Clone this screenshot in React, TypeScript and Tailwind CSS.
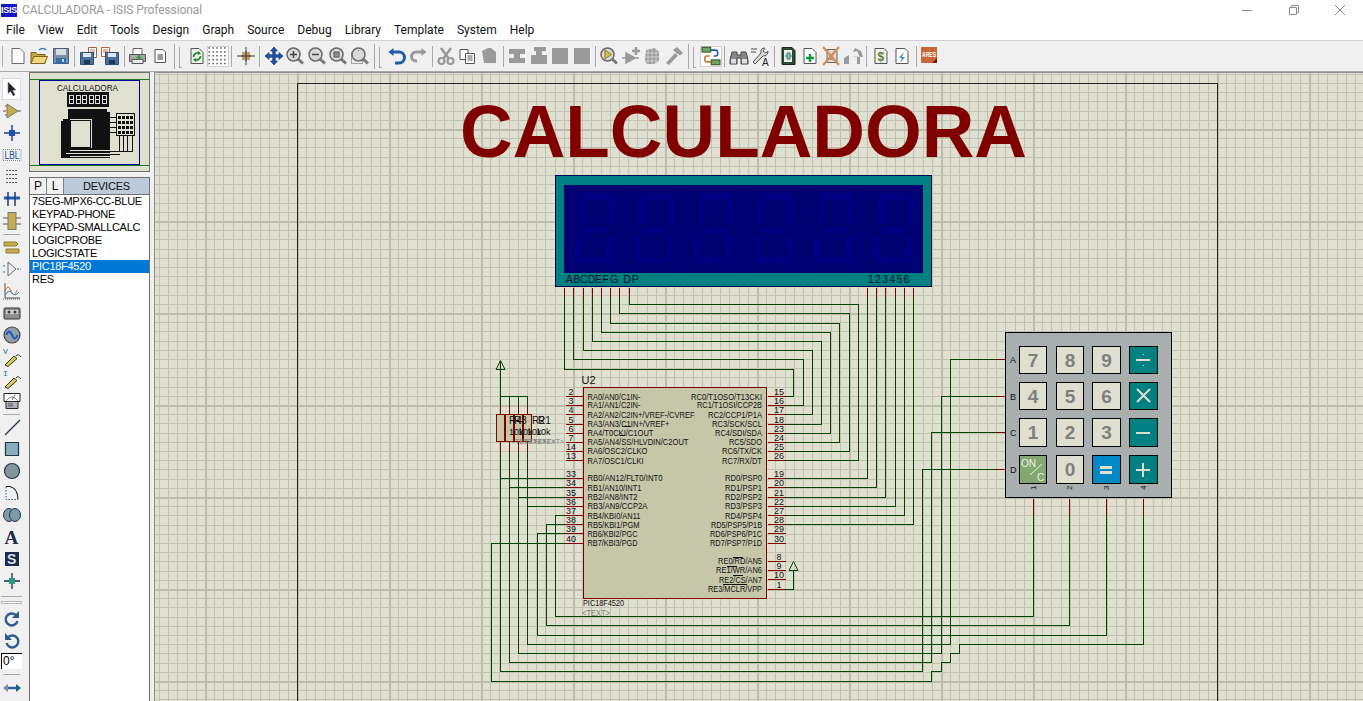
import React from "react";

const FONT = "'Liberation Sans', Arial, sans-serif";
const WIRE = "#004800";
const PIN = "#800000";
const s = (v: number) => Math.floor(v) + 0.5;
const toPath = (p: number[][]) => "M" + p.map(([x, y]) => `${s(x)} ${s(y)}`).join("L");

function Ic({ children }: { children: React.ReactNode }) {
  return <svg width="20" height="20" viewBox="0 0 20 20" className="block">{children}</svg>;
}
const G = "#9a9a9a";
const mag = (inner: React.ReactNode) => (
  <>
    <path d="M12.5 12.5l5.5 5" stroke="#777" strokeWidth="3" />
    <circle cx="8.5" cy="8.5" r="6.5" fill="#d9d9d9" stroke="#6a6a6a" strokeWidth="1.5" />
    {inner}
  </>
);
const floppy = <><path d="M1.5 6.5h13v12h-13z" fill="#4a6f9c" stroke="#2f4f78" /><path d="M4 7h8v4H4z" fill="#dfe6ee" /><path d="M5 14h6v4H5z" fill="#23364f" /></>;

const topIcons: Record<string, React.ReactNode> = {
  new: <Ic><path d="M4 2.500h8l4 4v11H4z" fill="#fff" stroke="#6a6a6a" /></Ic>,
  open: <Ic><path d="M2 6.500h5l1.500 2H16v9H2z" fill="#c9a53e" stroke="#7a6320" /><path d="M2 17.500l3-7h13.500l-3 7z" fill="#f3d77c" stroke="#7a6320" /><path d="M10 4q4-3 7 0" fill="none" stroke="#3f79c2" strokeWidth="1.500" /></Ic>,
  save: <Ic><path d="M2.500 2.500h15v15h-15z" fill="#7c8ea3" stroke="#4e5d70" /><path d="M5 3h10v6H5z" fill="#d8dde3" /><path d="M5 12h10v5.500H5z" fill="#2d6fb3" /><path d="M11 13h2v3h-2z" fill="#ccd" /></Ic>,
  imp: <Ic><path d="M9.500 1.500h8v10h-8z" fill="#fff" stroke="#8a6a50" /><path d="M11 4h5M11 6h5M11 8h5" stroke="#c08060" />{floppy}</Ic>,
  exp: <Ic><path d="M1.500 1.500h8v9h-8z" fill="#fff" stroke="#b06a40" /><path d="M3 4h5M3 6h5" stroke="#d06a30" />{<g transform="translate(4 0)">{floppy}</g>}</Ic>,
  print: <Ic><path d="M5 2.500h9v6H5z" fill="#fff" stroke="#666" /><path d="M1.500 8.500h16v7h-16z" fill="#a8a8a8" stroke="#555" /><path d="M4 13.500h11v4H4z" fill="#eee" stroke="#555" /><path d="M11 9v5M8.500 11.500h5" stroke="#19a032" strokeWidth="1.600" /></Ic>,
  area: <Ic><path d="M5 3.500h8l2.500 2.500v10.500H5z" fill="#fff" stroke="#555" /><path d="M7.500 8h5.500v6H7.500z" fill="#999" /></Ic>,
  refresh: <Ic><path d="M4 2.500h8l4 4v11H4z" fill="#eef3ea" stroke="#555" /><path d="M6.500 11a4 4 0 0 1 6-3.500M13.500 10a4 4 0 0 1-6 3.500" fill="none" stroke="#1c8a2a" strokeWidth="1.800" /><path d="M11 5l3 2.500-3.200 1.500zM9 16l-3-2.500 3.200-1.500z" fill="#1c8a2a" /></Ic>,
  grid: <Ic>{[3, 7, 11, 15, 19].flatMap((y) => [1, 5, 9, 13, 17].map((x) => <rect key={x + "-" + y} x={x - 0.5} y={y - 2} width="1.500" height="1.500" fill="#555" />))}</Ic>,
  origin: <Ic><path d="M10 1v18M1 10h18" stroke="#333" /><rect x="6" y="6" width="8" height="8" fill="#b8a060" /><path d="M10 5v10M5 10h10" stroke="#333" /></Ic>,
  pan: <Ic><path d="M10 1l3.500 4H11.300v3.700H15V6.500l4 3.500-4 3.500v-2.200h-3.700V15h2.200L10 19l-3.500-4h2.200v-3.700H5v2.200L1 10l4-3.500v2.200h3.700V5H6.500z" fill="#1b52a8" stroke="#10306a" strokeWidth=".6" /></Ic>,
  zin: <Ic>{mag(<path d="M8.500 5v7M5 8.500h7" stroke="#444" strokeWidth="1.500" />)}</Ic>,
  zout: <Ic>{mag(<path d="M5 8.500h7" stroke="#444" strokeWidth="1.500" />)}</Ic>,
  zall: <Ic>{mag(<rect x="6" y="6" width="5" height="5" fill="#8f8f8f" stroke="#555" />)}</Ic>,
  zarea: <Ic><rect x="1.500" y="6.500" width="11" height="11" fill="none" stroke="#555" strokeDasharray="1 1" />{mag(<path d="M8 4h1v1H8z" fill="#555" />)}</Ic>,
  undo: <Ic><path d="M5 6h7a4.500 4.500 0 0 1 0 11H8" fill="none" stroke="#1c5cab" strokeWidth="3" /><path d="M1.500 6l5-4v8z" fill="#1c5cab" /></Ic>,
  redo: <Ic><path d="M15 6H8a4.500 4.500 0 0 0 0 9h1" fill="none" stroke={G} strokeWidth="3" /><path d="M18.500 6l-5-4v8z" fill={G} /></Ic>,
  cut: <Ic><path d="M5 2l8 11M15 2L7 13" stroke={G} strokeWidth="2.500" /><circle cx="5.500" cy="15" r="3" fill="none" stroke={G} strokeWidth="2.200" /><circle cx="14.500" cy="15" r="3" fill="none" stroke={G} strokeWidth="2.200" /></Ic>,
  copy: <Ic><path d="M2 3.500h8v10H2z" fill="#fff" stroke="#555" /><path d="M7.500 7.500h9v10h-9z" fill="#fff" stroke="#555" /><path d="M9.500 10h5M9.500 12h5M9.500 14h5" stroke="#555" /></Ic>,
  paste: <Ic><path d="M3 5l6-3h3l5 4v11H5z" fill={G} /></Ic>,
  bcopy: <Ic><path d="M2 3h16v5H2zM7 8h6v4H7zM2 12h16v5H2z" fill={G} /></Ic>,
  bmove: <Ic><path d="M2 9h16v9H2zM7 5h6v4H7zM5 1h12v4H5z" fill={G} /></Ic>,
  brot: <Ic><path d="M2 2h16v16H2z" fill={G} /></Ic>,
  pick: <Ic>{mag(<path d="M6 4l6.500 4.500L6 13z" fill="#d8c050" stroke="#8a7a20" />)}</Ic>,
  make: <Ic><path d="M1 12h4M14 12h4M5 7l9 5-9 5z" fill={G} stroke={G} strokeWidth="1.500" /><path d="M15 1v8M11 5h8" stroke={G} strokeWidth="2.500" /></Ic>,
  pack: <Ic><path d="M4 4l9-2 4 4v9l-5 3H5l-2-3z" fill={G} /><path d="M2 7h17M2 11h17M2 15h17M6 1v18M10 1v18M14 1v18" stroke="#f0f0f0" strokeWidth=".6" /></Ic>,
  hammer: <Ic><path d="M2 17l9-10 3 2.500L5 19z" fill={G} /><path d="M9 4l4-3 6 6-3 2.500-3-2z" fill={G} /></Ic>,
  auto: <Ic><rect x="1" y="1" width="9" height="5" fill="#6fa75f" stroke="#2c4a25" /><rect x="10.500" y="14" width="9" height="5" fill="#6fa75f" stroke="#2c4a25" /><path d="M10 4h5q2 0 2 2v2q0 2-2 2h-2" fill="none" stroke="#1c5cab" strokeWidth="1.600" /><path d="M10.500 16H6q-2 0-2-2v-2q0-2 2-2h3" fill="none" stroke="#d0742a" strokeWidth="1.600" /></Ic>,
  bino: <Ic><path d="M3 6h5v3h4V6h5l2 8v4h-7v-6H8v6H1v-4z" fill="#888" stroke="#444" /><rect x="2" y="13" width="5" height="4.500" fill="#ddd" /><rect x="13" y="13" width="5" height="4.500" fill="#ddd" /></Ic>,
  prop: <Ic><path d="M1 3h6M1 6h5" stroke="#444" /><path d="M3 16l8-9q-1-5 4-5l-2 3 3 2 2-2q0 5-5 5l-8 8z" fill="#d8d8d8" stroke="#555" /><text x="12" y="19.500" fontSize="10" fontFamily={FONT} fill="#222">A</text></Ic>,
  explorer: <Ic><path d="M4 1.500h10l3 3v14H4z" fill="#2f4a33" stroke="#222" /><path d="M6 4h8v12H6z" fill="#e7efe2" /><path d="M7 10h2M12 10h2M9 7h3v6H9z" stroke="#2a7a8a" fill="#9ec59a" /></Ic>,
  nsheet: <Ic><path d="M4 2.500h8l4 4v11H4z" fill="#fff" stroke="#555" /><path d="M10 8v8M6 12h8" stroke="#0f9a3a" strokeWidth="2.500" /></Ic>,
  rsheet: <Ic><path d="M6 3.500h8l2 2v11H6z" fill="#dcdcdc" stroke="#666" /><path d="M8 8h4v6H8z" fill="#999" /><path d="M2 1l16 18M18 1L2 19" stroke="#d98b4f" strokeWidth="2.200" /></Ic>,
  child: <Ic><path d="M1 12l5-3v9H1zM8 10h6v8h3v-7l-3-6-4 1 2-4 6 3 2 6" fill={G} /></Ic>,
  bom: <Ic><path d="M4 2.500h9l3 3v12H4z" fill="#f2f2e8" stroke="#555" /><text x="6.500" y="15" fontSize="12" fontFamily={FONT} fill="#667a3a" fontWeight="700">$</text></Ic>,
  erc: <Ic><path d="M4 2.500h9l3 3v12H4z" fill="#fff" stroke="#555" /><path d="M12 6l-5 6h3l-2 5 5-6h-3z" fill="#2a8ad8" /></Ic>,
  ares: <Ic><rect x="1" y="1" width="16" height="16" fill="#c9663a" /><path d="M12 17l5-5v5z" fill="#7a1a10" /><text x="2" y="11" fontSize="7" fontWeight="700" fontFamily={FONT} fill="#fff" textLength="14" lengthAdjust="spacingAndGlyphs">ARES</text></Ic>,
};

const topBar: string[] = ["new", "open", "save", "|", "imp", "exp", "|", "print", "area", "#", "refresh", "*grid", "|", "origin", "|", "pan", "zin", "zout", "zall", "zarea", "#", "undo", "redo", "|", "cut", "copy", "paste", "|", "bcopy", "bmove", "brot", "brot", "|", "pick", "make", "pack", "hammer", "#", "*auto", "|", "bino", "prop", "|", "explorer", "nsheet", "rsheet", "child", "|", "bom", "erc", "|", "ares"];

function TopToolbar() {
  return (
    <div className="flex h-[31px] items-center pl-[7px] bg-[#f0f0f0] border-b border-[#a8a8a8] relative shrink-0">
      <div className="absolute left-[2px] top-[5px] w-[2px] h-[21px] border-l border-[#b0b0b0]" />
      {topBar.map((it, i) => {
        if (it === "|") return <div key={i} className="w-[6.4px] h-[21px] flex justify-center"><div className="w-px h-full bg-[#a9a9a9]" /></div>;
        if (it === "#") return (
          <div key={i} className="w-[15.5px] h-[25px] flex justify-center gap-[4px]">
            <div className="w-px h-full bg-[#a9a9a9]" />
            <div className="w-[3px] h-[21px] mt-[3px] border-l border-b border-[#a9a9a9]" />
          </div>
        );
        const on = it.startsWith("*");
        const key = on ? it.slice(1) : it;
        return (
          <div key={i} className={on ? "w-[21.5px] h-[21px] flex items-center justify-center bg-white border border-[#d0d0d0]" : "w-[21.5px] h-[21px] flex items-center justify-center"}>
            {topIcons[key]}
          </div>
        );
      })}
    </div>
  );
}

const pencil = (label: string) => (
  <Ic>
    <text x="1" y="7" fontSize="8" fontFamily="'Liberation Mono', monospace" fill="#008080">{label}</text>
    <path d="M3 18l9-9 3 2.500-9 8z" fill="#e0c850" stroke="#333" />
    <path d="M14 9q2-3 5 1" fill="none" stroke="#333" />
  </Ic>
);
const leftIcons: Record<string, React.ReactNode> = {
  pointer: <Ic><path d="M6 2l9 9-4 .5 3 5.500-2 1-3-5.500L6 15z" fill="#222" stroke="#556" strokeWidth=".7" /></Ic>,
  comp: <Ic><path d="M1 10h3M16 10h3M7 5h-4M7 14H3" stroke="#555" /><path d="M5 3l11 7-11 7z" fill="#c6ae4e" stroke="#777" /></Ic>,
  junction: <Ic><path d="M10 2v16M2 10h16" stroke="#123e8a" strokeWidth="1.400" /><rect x="7" y="7" width="6" height="6" fill="#1b4fb4" /></Ic>,
  lbl: <Ic><rect x="1" y="4.500" width="18" height="11" fill="none" stroke="#888" strokeDasharray="1 1" /><text x="2.500" y="14" fontSize="10" fontFamily={FONT} fill="#124a9a" textLength="15" lengthAdjust="spacingAndGlyphs">LBL</text></Ic>,
  script: <Ic><path d="M4 3.500h12M4 7.500h12M4 11.500h12M4 15.500h12" stroke="#555" strokeDasharray="2 1" /></Ic>,
  bus: <Ic><path d="M2 9h16" stroke="#1c5cc0" strokeWidth="3" /><path d="M6 3v14M13 3v14" stroke="#1f3f66" strokeWidth="1.500" /></Ic>,
  sub: <Ic><path d="M1 7h5M1 13h5M14 7h5M14 13h5" stroke="#555" /><rect x="6" y="1.500" width="8" height="17" fill="#c6ae4e" stroke="#777" /></Ic>,
  term: <Ic><path d="M2 5h12l2 2-2 2H2zM4 12h13v4H4z" fill="#c6ae4e" stroke="#8a7a2a" /></Ic>,
  port: <Ic><path d="M6 3l8 7-8 7z" fill="none" stroke="#667" /><path d="M1 7h3M1 13h3M15 10h4" stroke="#008080" strokeDasharray="2 1" /></Ic>,
  graph: <Ic><path d="M3 2v15h15" stroke="#555" fill="none" /><path d="M3 10q3-8 6 0t6-1" fill="none" stroke="#d0742a" /><path d="M3 14q4-6 7-2t7-1" fill="none" stroke="#2a7ac0" /><path d="M1 18h18" stroke="#555" strokeDasharray="1 1" /></Ic>,
  tape: <Ic><rect x="2" y="5" width="16" height="11" rx="1" fill="#8f8f8f" stroke="#333" /><rect x="4" y="7" width="12" height="4" fill="#d0d0d0" /><circle cx="7" cy="9" r="1.500" fill="#333" /><circle cx="13" cy="9" r="1.500" fill="#333" /></Ic>,
  gen: <Ic><circle cx="10" cy="10" r="8" fill="#969fa8" stroke="#444" strokeWidth="1.200" /><path d="M4.500 10q2.500-7 5.500 0t5.500 0" fill="none" stroke="#1c5cc0" strokeWidth="2" /></Ic>,
  vp: pencil("V"),
  ip: pencil("I"),
  inst: <Ic><path d="M2 2.500h16v8H2z" fill="#fff" stroke="#222" /><path d="M4 10q6-8 12 0" fill="none" stroke="#d0742a" /><path d="M10 9l3-5" stroke="#2a7ac0" /><path d="M4 10.500h12v7H4z" fill="#aeb4ba" stroke="#222" /><path d="M6 13h5M6 15h5" stroke="#555" /></Ic>,
  line: <Ic><path d="M3 18L18 3" stroke="#23364f" strokeWidth="1.300" /></Ic>,
  box: <Ic><path d="M3.500 3.500h13v13h-13z" fill="#87aeba" stroke="#23364f" strokeWidth="1.200" /></Ic>,
  circle: <Ic><circle cx="10" cy="10" r="7.500" fill="#84979a" stroke="#23364f" strokeWidth="1.200" /></Ic>,
  arc: <Ic><path d="M4 3.500h4q8 2 8 13" fill="none" stroke="#222" strokeWidth="1.200" /><path d="M4 4v12.500h12" fill="none" stroke="#1c5cc0" strokeDasharray="1.500 1.500" /></Ic>,
  path: <Ic><ellipse cx="7" cy="10" rx="5.500" ry="6.500" fill="#7d9aa8" stroke="#23364f" /><ellipse cx="13" cy="10" rx="5.500" ry="6.500" fill="#7d9aa8" stroke="#23364f" /></Ic>,
  A: <Ic><text x="2.500" y="17" fontSize="19" fontWeight="700" fontFamily="'Liberation Serif', serif" fill="#1d2a4a">A</text></Ic>,
  S: <Ic><rect x="3" y="3" width="14" height="14" fill="#1d2a4a" /><text x="5" y="15" fontSize="14" fontWeight="700" fontFamily={FONT} fill="#d8e0e8">S</text></Ic>,
  marker: <Ic><path d="M10 2v16M2 10h16" stroke="#1d2a4a" strokeWidth="1.300" /><rect x="7" y="7" width="6" height="6" fill="#2e9a7c" /></Ic>,
  cw: <Ic><path d="M15.500 12a6 6 0 1 1-1.800-6" fill="none" stroke="#2d5c92" strokeWidth="2.400" /><path d="M17 2v7h-7z" fill="#2d5c92" /></Ic>,
  ccw: <Ic><path d="M4.500 12a6 6 0 1 0 1.800-6" fill="none" stroke="#2d5c92" strokeWidth="2.400" /><path d="M3 2v7h7z" fill="#2d5c92" /></Ic>,
  flip: <Ic><path d="M1 10l5-4v8z" fill="#6e94b0" /><path d="M19 10l-5-4v8z" fill="#2d5c92" /><path d="M6 10h8" stroke="#2d5c92" strokeWidth="2.400" /></Ic>,
};

function LeftBar() {
  const sep = <div className="h-px mx-[3px] my-[1.5px] bg-[#a9a9a9]" />;
  const row = (k: string, on = false) => (
    <div key={k} className={on ? "h-[22px] mx-[2px] flex items-center justify-center bg-white border border-[#d8d8d8]" : "h-[22px] flex items-center justify-center"}>{leftIcons[k]}</div>
  );
  return (
    <div className="w-[29px] shrink-0 flex flex-col pt-[6px] pr-[6px] bg-[#f0f0f0] box-border">
      {row("pointer", true)}
      {["comp", "junction", "lbl", "script", "bus", "sub"].map((k) => row(k))}
      {sep}
      {["term", "port", "graph", "tape", "gen", "vp", "ip", "inst"].map((k) => row(k))}
      {sep}
      {["line", "box", "circle", "arc", "path", "A", "S", "marker"].map((k) => row(k))}
      <div className="h-px mx-[1px] mt-[4px] bg-[#a9a9a9]" />
      <div className="h-[3px] mx-[1px] mt-[4px] border border-[#b8b8b8] bg-white" />
      <div className="mt-[4px]">{row("cw")}</div>
      {row("ccw")}
      <div className="mx-[1px] h-[16px] bg-white border-l border-t border-black text-[12px] leading-[14px] font-['Liberation_Sans'] pl-px mt-px">0°</div>
      <div className="h-px mx-[3px] mt-[5px] bg-[#a9a9a9]" />
      <div className="mt-[2px]">{row("flip")}</div>
    </div>
  );
}

function Thumb() {
  return (
    <svg width="121" height="100" viewBox="29 72 121 100" className="block" shapeRendering="crispEdges">
      <rect x="29.500" y="72.500" width="120" height="99" fill="#dfdfcf" stroke="#707070" />
      <path d="M30 79.500h119M30 165.500h119" stroke="#1e7a1e" />
      <rect x="39.500" y="80.500" width="100" height="84" fill="#e0e0d0" stroke="#0000a0" />
      <text x="57" y="91" fontSize="9" fontFamily={FONT} fill="#111" textLength="61" lengthAdjust="spacingAndGlyphs" shapeRendering="auto">CALCULADORA</text>
      <rect x="67" y="92" width="42" height="15" fill="#111" />
      {[0, 1, 2, 3, 4, 5].map((i) => (
        <path key={i} d={`M${69 + i * 6.500} 95h1v9h-1zM${73 + i * 6.500} 95h1v9h-1zM${70 + i * 6.500} 95h3v1h-3zM${70 + i * 6.500} 99h3v1h-3zM${70 + i * 6.500} 103h3v1h-3z`} fill="#ddd" />
      ))}
      <path d="M68 109h39v3h3v36H92v-29H70v29h-8v-6h-1v-21h2v-2h5z" fill="#111" />
      <path d="M61 135h9v23H61zM61 148h49v10H61z" fill="#111" />
      <path d="M70 150h40M66 153h50M70 156h50" stroke="#e0e0d0" />
      <rect x="70.500" y="120.500" width="20" height="27" fill="#e0e0d0" stroke="#111" />
      <rect x="116.500" y="113.500" width="18" height="22" fill="#e0e0d0" stroke="#111" />
      {[0, 1, 2, 3].flatMap((r) => [0, 1, 2, 3].map((c) => <rect key={r + "-" + c} x={118 + c * 4} y={116 + r * 5} width="3" height="3" fill="#111" />))}
      <path d="M110 117h6M110 122h6M110 127h6M110 132h6M119 135v17M123 135v17M127 135v17M132 135v17M110 151h22M110 154h10" stroke="#111" fill="none" />
    </svg>
  );
}

function Panel() {
  const devices = ["7SEG-MPX6-CC-BLUE", "KEYPAD-PHONE", "KEYPAD-SMALLCALC", "LOGICPROBE", "LOGICSTATE", "PIC18F4520", "RES"];
  return (
    <div className="w-[125px] shrink-0 flex flex-col bg-[#f0f0f0]">
      <Thumb />
      <div className="mt-[5px] w-[121px] flex-1 flex flex-col border-l border-t border-r border-[#707070] bg-white">
        <div className="h-[17px] flex bg-[#bccad9] border-b border-[#707070] font-['Liberation_Sans'] text-[11px] text-[#111] shrink-0">
          <div className="w-[17px] flex items-center justify-center text-[12px] bg-[#f0f0f0] border-r border-[#808080]">P</div>
          <div className="w-[17px] flex items-center justify-center text-[12px] bg-[#f0f0f0] border-r border-[#808080]">L</div>
          <div className="flex-1 flex items-center justify-center tracking-[-0.2px]">DEVICES</div>
        </div>
        <div className="font-['Liberation_Sans'] text-[11px] leading-[13px] tracking-[-0.3px] text-black">
          {devices.map((d) => (
            <div key={d} className={d === "PIC18F4520" ? "h-[13px] pl-[2px] bg-[#0078d7] text-white whitespace-nowrap" : "h-[13px] pl-[2px] whitespace-nowrap"}>{d}</div>
          ))}
        </div>
      </div>
    </div>
  );
}

const gridX: number[] = [];
for (let k = -80; k < 60; k++) gridX.push(849 + k * 9.2);
const gridY: number[] = [];
for (let k = -60; k < 30; k++) gridY.push(589 + k * 9.2);

const leftPins: [string, number, string, number][] = [
  ["2", 396.7, "RA0/AN0/C1IN-", 53], ["3", 405.3, "RA1/AN1/C2IN-", 53], ["4", 414.7, "RA2/AN2/C2IN+/VREF-/CVREF", 107], ["5", 424, "RA3/AN3/C1IN+/VREF+", 82],
  ["6", 433, "RA4/T0CKI/C1OUT", 66], ["7", 442, "RA5/AN4/SS/HLVDIN/C2OUT", 101], ["14", 451.3, "RA6/OSC2/CLKO", 60], ["13", 460.7, "RA7/OSC1/CLKI", 56],
  ["33", 478.3, "RB0/AN12/FLT0/INT0", 75], ["34", 487.6, "RB1/AN10/INT1", 54], ["35", 497, "RB2/AN8/INT2", 50], ["36", 506.3, "RB3/AN9/CCP2A", 60],
  ["37", 515.7, "RB4/KBI0/AN11", 53], ["38", 524.7, "RB5/KBI1/PGM", 52], ["39", 533.7, "RB6/KBI2/PGC", 50], ["40", 543.3, "RB7/KBI3/PGD", 50],
];
const rightPins: [string, number, string, number][] = [
  ["15", 396.7, "RC0/T1OSO/T13CKI", 71], ["16", 405.3, "RC1/T1OSI/CCP2B", 65], ["17", 414.7, "RC2/CCP1/P1A", 54], ["18", 424, "RC3/SCK/SCL", 50],
  ["23", 433, "RC4/SDI/SDA", 47], ["24", 442, "RC5/SDO", 33], ["25", 451.3, "RC6/TX/CK", 40], ["26", 460.7, "RC7/RX/DT", 40],
  ["19", 478.3, "RD0/PSP0", 37], ["20", 487.6, "RD1/PSP1", 37], ["21", 497, "RD2/PSP2", 37], ["22", 506.3, "RD3/PSP3", 37],
  ["27", 515.7, "RD4/PSP4", 37], ["28", 524.7, "RD5/PSP5/P1B", 51], ["29", 533.7, "RD6/PSP6/P1C", 52], ["30", 543.3, "RD7/PSP7/P1D", 52],
  ["8", 561.3, "RE0/RD/AN5", 44], ["9", 570.3, "RE1/WR/AN6", 46], ["10", 579.7, "RE2/CS/AN7", 43], ["1", 589, "RE3/MCLR/VPP", 54],
];
const wires: number[][][] = [
  [[564.7, 296], [564.7, 369.3], [793.3, 369.3], [793.3, 396.7], [785, 396.7]],
  [[573.7, 296], [573.7, 359.3], [803.7, 359.3], [803.7, 405.3], [785, 405.3]],
  [[583.7, 296], [583.7, 350.3], [812.7, 350.3], [812.7, 414.7], [785, 414.7]],
  [[592.7, 296], [592.7, 341.3], [821.7, 341.3], [821.7, 424], [785, 424]],
  [[601.7, 296], [601.7, 332.3], [830.7, 332.3], [830.7, 433], [785, 433]],
  [[610.7, 296], [610.7, 323.3], [839.7, 323.3], [839.7, 442], [785, 442]],
  [[619.3, 296], [619.3, 313.3], [849.7, 313.3], [849.7, 451.3], [785, 451.3]],
  [[629.3, 296], [629.3, 304.3], [858.7, 304.3], [858.7, 460.7], [785, 460.7]],
  [[867.7, 296], [867.7, 478.3], [785, 478.3]],
  [[876.7, 296], [876.7, 487.6], [785, 487.6]],
  [[885.7, 296], [885.7, 497], [785, 497]],
  [[895.7, 296], [895.7, 506.3], [785, 506.3]],
  [[904.7, 296], [904.7, 515.7], [785, 515.7]],
  [[913.7, 296], [913.7, 524.7], [785, 524.7]],
  [[995, 359.3], [950.3, 359.3], [950.3, 644.3], [527.3, 644.3], [527.3, 506.3], [565, 506.3]],
  [[995, 396.3], [941.3, 396.3], [941.3, 653.3], [518.3, 653.3], [518.3, 497], [565, 497]],
  [[995, 432.3], [931.3, 432.3], [931.3, 662.3], [509.3, 662.3], [509.3, 487.6], [565, 487.6]],
  [[995, 469], [922.3, 469], [922.3, 671.3], [500.3, 671.3], [500.3, 478.3], [565, 478.3]],
  [[1033.3, 515], [1033.3, 616.3], [555.7, 616.3], [555.7, 515.7], [565, 515.7]],
  [[1069.3, 515], [1069.3, 625.3], [546.7, 625.3], [546.7, 524.7], [565, 524.7]],
  [[1106.3, 515], [1106.3, 635.3], [537.3, 635.3], [537.3, 533.7], [565, 533.7]],
  [[1143.3, 515], [1143.3, 644.3], [959.3, 644.3], [959.3, 653.3], [950.3, 653.3], [950.3, 662.3], [941.3, 662.3], [941.3, 671.3], [931.3, 671.3], [931.3, 681.3], [491.3, 681.3], [491.3, 543.3], [565, 543.3]],
  [[500.3, 360], [500.3, 405]], [[500.3, 396.3], [527.7, 396.3]], [[509.3, 396.3], [509.3, 405]], [[518.5, 396.3], [518.5, 405]], [[527.7, 396.3], [527.7, 405]],
  [[500.3, 451], [500.3, 480]], [[509.3, 451], [509.3, 490]], [[518.5, 451], [518.5, 500]], [[527.7, 451], [527.7, 508]],
  [[785, 589], [793.7, 589], [793.7, 570]],
];

function T({ x, y, w, children, anchor, size = 9, fill = "#111" }: { x: number; y: number; w?: number; children: React.ReactNode; anchor?: "end" | "middle"; size?: number; fill?: string }) {
  return (
    <text x={anchor === "end" && w ? x - w : x} y={y} fontSize={size} fontFamily={FONT} fill={fill} textAnchor={w ? undefined : anchor} textLength={w} lengthAdjust={w ? "spacingAndGlyphs" : undefined}>{children}</text>
  );
}

function Digit({ i }: { i: number }) {
  const seg = "#000080";
  return (
    <g stroke={seg} strokeWidth="6.500" fill="none" transform={`translate(${i * 59.8} 0)`}>
      <path d="M581.500 224l.5-24q0-3.500 4-3.500h22q3.500 0 3.500 3.500l-.8 24" />
      <path d="M583 230h24" />
      <path d="M578 236l-.5 19q0 5 4 5h24q4 0 4-5l.7-19" />
      <rect x="613" y="262" width="4.500" height="4" fill={seg} stroke="none" />
    </g>
  );
}

function Keypad() {
  const xs: [number, number][] = [[1019.5, 27], [1056.5, 27], [1092.5, 28], [1129.5, 28]];
  const ys: [number, number][] = [[346.5, 27], [382.5, 27], [418.5, 28], [455.5, 28]];
  const nums = [["7", "8", "9"], ["4", "5", "6"], ["1", "2", "3"], ["", "0", ""]];
  return (
    <g>
      <rect x="1005.500" y="332.500" width="166" height="165" fill="#a9afaf" stroke="#000" />
      {ys.map(([y, h], r) => xs.map(([x, w], c) => {
        let fill = "#dfdfcf";
        if (c === 3) fill = "#008080";
        if (r === 3 && c === 0) fill = "#80a870";
        if (r === 3 && c === 2) fill = "#0088c4";
        return (
          <g key={r + "-" + c}>
            <rect x={x} y={y} width={w} height={h} fill={fill} stroke="#000" />
            {c < 3 && nums[r][c] && <text x={x + w / 2} y={y + 20.5} textAnchor="middle" fontSize="19" fontWeight="700" fontFamily={FONT} fill="#808080">{nums[r][c]}</text>}
          </g>
        );
      }))}
      <g stroke="#dfdfcf" strokeWidth="2" shapeRendering="auto">
        <path d="M1136 360h14" />
        <path d="M1137 389l13 13M1150 389l-13 13" />
        <path d="M1136 433h14" />
        <path d="M1136 470h14M1143 463v14" />
      </g>
      <rect x="1143" y="354" width="1" height="1" fill="#dfdfcf" />
      <rect x="1143" y="365" width="1" height="1" fill="#dfdfcf" />
      <rect x="1100" y="466" width="12" height="2.500" fill="#dfdfcf" />
      <rect x="1100" y="471" width="12" height="2.500" fill="#dfdfcf" />
      <g shapeRendering="auto">
        <T x={1021} y={467} size={10} fill="#f0f0e4">ON</T>
        <path d="M1030 475l12-11" stroke="#f0f0e4" />
        <T x={1037} y={481} size={10} fill="#f0f0e4">C</T>
        {([["A", 363], ["B", 400], ["C", 436], ["D", 473]] as [string, number][]).map(([l, y]) => <T key={l} x={1010} y={y} size={9}>{l}</T>)}
        {([["1", 1033], ["2", 1069], ["3", 1106], ["4", 1143]] as [string, number][]).map(([l, x]) => (
          <text key={l} transform={`translate(${x + 3} 490) rotate(-90)`} fontSize="8" fontFamily={FONT} fill="#111">{l}</text>
        ))}
      </g>
    </g>
  );
}

function Canvas() {
  const letters: [string, number][] = [["A", 565.7], ["B", 573.3], ["C", 580], ["D", 587.7], ["E", 595], ["F", 602.3], ["G", 610], ["D", 623.3], ["P", 631.7]];
  return (
    <div className="flex-1 min-w-0 relative overflow-hidden">
      <svg width="1209" height="629" viewBox="154 72 1209 629" className="block" shapeRendering="crispEdges">
        <rect x="154" y="72" width="1209" height="629" fill="#e0e0d0" />
        {gridX.map((x, i) => <rect key={"x" + i} x={Math.round(x)} y="72" width={i % 10 === 0 ? 2 : 1} height="629" fill={i % 10 === 0 ? "#bcbcac" : "#c2c2b2"} />)}
        {gridY.map((y, i) => <rect key={"y" + i} x="154" y={Math.round(y)} width="1209" height={i % 10 === 0 ? 2 : 1} fill={i % 10 === 0 ? "#bcbcac" : "#c2c2b2"} />)}
        <path d="M154.500 701V72.500H1363" fill="none" stroke="#909090" />
        <path d="M297.500 701V83.500H1217.500V701" fill="none" stroke="#222" />
        <text x="460" y="157" fontSize="74" fontWeight="700" fontFamily={FONT} fill="#800000" textLength="567" lengthAdjust="spacingAndGlyphs" shapeRendering="auto">CALCULADORA</text>

        {wires.map((w, i) => <path key={i} d={toPath(w)} fill="none" stroke={WIRE} />)}

        {[564.7, 573.7, 583.7, 592.7, 601.7, 610.7, 619.3, 629.3, 867.7, 876.7, 885.7, 895.7, 904.7, 913.7].map((x) => <path key={x} d={toPath([[x, 287], [x, 296]])} stroke={PIN} />)}
        <rect x="555.500" y="175.500" width="376" height="111" fill="#008080" stroke="#000050" />
        <rect x="564" y="185" width="359" height="88" fill="#000070" />
        {[624, 684, 744, 803, 862].map((x) => <rect key={x} x={x} y="185" width="1" height="88" fill="#000080" />)}
        {[0, 1, 2, 3, 4, 5].map((i) => <Digit key={i} i={i} />)}
        <g shapeRendering="auto">
          {letters.map(([l, x], i) => <text key={i} x={x} y="283" fontSize="10.500" fontFamily={FONT} fill="#00102a">{l}</text>)}
          {["1", "2", "3", "4", "5", "6"].map((l, i) => <text key={i} x={868 + i * 7.100} y="283" fontSize="10.500" fontFamily={FONT} fill="#00102a">{l}</text>)}
        </g>

        {leftPins.map(([n, y]) => <path key={n} d={toPath([[565, y], [583, y]])} stroke={PIN} />)}
        {rightPins.map(([n, y]) => <path key={n} d={toPath([[767, y], [785, y]])} stroke={PIN} />)}
        <rect x="583.500" y="387.500" width="183" height="211" fill="#c6c6a8" stroke="#800000" strokeWidth="1" />
        <g shapeRendering="auto">
          {leftPins.map(([n, y, l, w]) => (
            <g key={n}>
              <T x={571} y={y - 1.500} anchor="middle" size={9}>{n}</T>
              <T x={587.500} y={y + 3} w={w}>{l}</T>
            </g>
          ))}
          {rightPins.map(([n, y, l, w]) => (
            <g key={n}>
              <T x={779} y={y - 1.500} anchor="middle" size={9}>{n}</T>
              <T x={762} y={y + 3} w={w} anchor="end">{l}</T>
            </g>
          ))}
          <T x={581.500} y={384} size={11}>U2</T>
          <T x={583} y={606} w={41}>PIC18F4520</T>
          <T x={582} y={616} w={28} fill="#808080">{"<TEXT>"}</T>
        </g>
        <path d="M621.500 426.500h9M620 435.500h5M733 557.500h10M727 566.500h10M733 575.500h10M723 584.500h24" stroke="#111" />
        <path d="M500.500 360.500l-4.500 9h9z" fill="none" stroke={WIRE} shapeRendering="auto" />
        <path d="M793.500 561.500l-4.500 9h9z" fill="none" stroke={WIRE} shapeRendering="auto" />

        {[500.3, 509.3, 518.5, 527.7].map((x) => (
          <g key={x}>
            <path d={toPath([[x, 405], [x, 414]])} stroke={PIN} />
            <path d={toPath([[x, 441], [x, 451]])} stroke={PIN} />
            <rect x={Math.floor(x) - 3.500} y="414.500" width="8" height="27" fill="#c6c6a8" stroke="#800000" />
          </g>
        ))}
        <g shapeRendering="auto">
          {([["R4", 509], ["R3", 514], ["R2", 532], ["R1", 538]] as [string, number][]).map(([l, x]) => <T key={l} x={x} y={424} size={10}>{l}</T>)}
          {[509, 518, 527, 536].map((x) => <T key={x} x={x} y={435} size={9}>10k</T>)}
          {[511, 520, 529, 538].map((x) => <T key={x} x={x} y={444} size={7} fill="#808080">{"<TEXT>"}</T>)}
        </g>

        {[[995, 359.3], [995, 396.3], [995, 432.3], [995, 469]].map(([x, y]) => <path key={y} d={toPath([[x, y], [1005, y]])} stroke={PIN} />)}
        {[1033.3, 1069.3, 1106.3, 1143.3].map((x) => <path key={x} d={toPath([[x, 498], [x, 515]])} stroke={PIN} />)}
        <Keypad />
      </svg>
    </div>
  );
}

export default function App() {
  const menu = ["File", "View", "Edit", "Tools", "Design", "Graph", "Source", "Debug", "Library", "Template", "System", "Help"];
  return (
    <div className="w-[1363px] h-[701px] overflow-hidden flex flex-col bg-[#f0f0f0]">
      <div className="h-[20px] bg-white flex items-center pl-[1px] relative shrink-0">
        <div className="w-[16px] h-[13px] bg-[#1414c8] text-white text-[9px] leading-[13px] text-center font-bold font-['Liberation_Sans'] tracking-[-0.3px]">ISIS</div>
        <div className="ml-[5px] text-[12px] text-[#9a9a9a] font-['Roboto'] tracking-[-0.1px] whitespace-nowrap">CALCULADORA - ISIS Professional</div>
        <div className="ml-auto flex items-center">
          <svg width="12" height="12" viewBox="0 0 12 12" className="mr-[35px]"><path d="M1 6.500h10" stroke="#8c8c8c" /></svg>
          <svg width="12" height="12" viewBox="0 0 12 12" className="mr-[34px]"><path d="M1.500 3.500h7v7h-7zM3.500 3V1.500h7v7H9" fill="none" stroke="#8c8c8c" /></svg>
          <svg width="12" height="12" viewBox="0 0 12 12" className="mr-[17px]"><path d="M1 1l10 10M11 1L1 11" stroke="#8c8c8c" /></svg>
        </div>
      </div>
      <div className="h-[20px] bg-white flex items-center pl-[6px] gap-[13px] text-[12px] text-[#111] font-['Roboto'] border-b border-[#d0d0d0] shrink-0 box-content">
        {menu.map((m) => <span key={m}>{m}</span>)}
      </div>
      <TopToolbar />
      <div className="flex-1 min-h-0 flex">
        <LeftBar />
        <Panel />
        <Canvas />
      </div>
    </div>
  );
}
